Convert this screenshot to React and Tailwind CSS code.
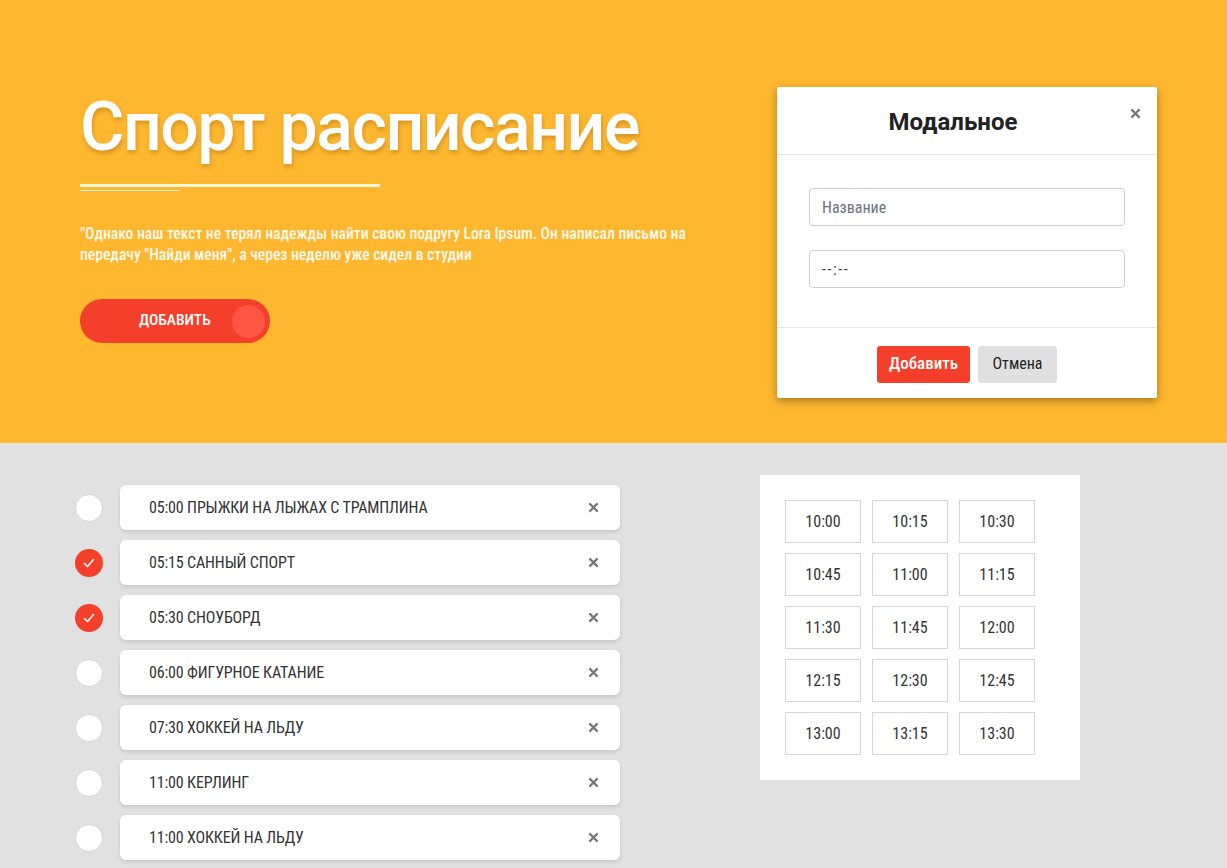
const items = [
  { t: "05:00 ПРЫЖКИ НА ЛЫЖАХ С ТРАМПЛИНА", c: false },
  { t: "05:15 САННЫЙ СПОРТ", c: true },
  { t: "05:30 СНОУБОРД", c: true },
  { t: "06:00 ФИГУРНОЕ КАТАНИЕ", c: false },
  { t: "07:30 ХОККЕЙ НА ЛЬДУ", c: false },
  { t: "11:00 КЕРЛИНГ", c: false },
  { t: "11:00 ХОККЕЙ НА ЛЬДУ", c: false },
];

const times = [
  "10:00", "10:15", "10:30",
  "10:45", "11:00", "11:15",
  "11:30", "11:45", "12:00",
  "12:15", "12:30", "12:45",
  "13:00", "13:15", "13:30",
];

function XIcon({ className }) {
  return (
    <svg viewBox="0 0 12 12" className={className} fill="none" stroke="currentColor" strokeWidth="2.4" strokeLinecap="butt">
      <path d="M1.5 1.5 L10.5 10.5 M10.5 1.5 L1.5 10.5" />
    </svg>
  );
}

export default function App() {
  return (
    <div className="min-h-[868px] bg-[#e1e1e1] font-['Roboto_Condensed',Roboto,sans-serif]">
      <header className="h-[443px] bg-[#feb72f] flex pl-[80px] pr-[70px] pt-[87px]">
        <div className="flex-1 flex flex-col">
          <h1 className="font-['Roboto',sans-serif] text-[68px] leading-[80px] font-medium tracking-[-1.5px] text-white [text-shadow:1px_3px_4px_rgba(120,70,0,0.3)]">
            Спорт расписание
          </h1>
          <div className="mt-[17px] w-[300px] h-[3px] bg-[#fff8d8]" />
          <div className="mt-[3px] w-[100px] h-[1px] bg-[#fff8d8]" />
          <p className="mt-[33px] w-[640px] text-[15.6px] leading-[21px] font-medium text-[#fffaf0]">
            "Однако наш текст не терял надежды найти свою подругу Lora Ipsum. Он написал письмо на передачу "Найди меня", а через неделю уже сидел в студии
          </p>
          <button className="mt-[33px] w-[190px] h-[44px] rounded-full bg-[#f4402a] flex items-center pl-[59px] pr-[5px] text-white text-[15.5px] font-medium">
            <span className="flex-1 text-left">ДОБАВИТЬ</span>
            <span className="w-[33px] h-[33px] rounded-full bg-[#ff5545]" />
          </button>
        </div>
        <div className="w-[380px] h-[311px] bg-white shadow-[0_3px_8px_rgba(0,0,0,0.35)] flex flex-col rounded-[2px]">
          <div className="h-[68px] border-b border-[#e6e6e6] flex items-center pl-[16px] pr-[16px]">
            <div className="flex-1 text-center font-['Roboto',sans-serif] font-bold text-[24px] text-[#222] pt-[2px]">
              Модальное
            </div>
            <div className="w-[28px] h-[28px] flex items-start justify-end -mt-[14px] text-[#777]">
              <XIcon className="w-[11px] h-[11px] mt-[8px]" />
            </div>
          </div>
          <div className="flex-1 flex flex-col gap-[24px] px-[32px] pt-[33px] border-b border-[#e6e6e6]">
            <input
              placeholder="Название"
              className="h-[38px] rounded-[4px] border border-[#cfcfcf] px-[12px] text-[16px] placeholder:text-[#6c757d] outline-none"
            />
            <input
              placeholder="--:--"
              className="h-[38px] rounded-[4px] border border-[#cfcfcf] px-[12px] text-[16px] tracking-[1.5px] placeholder:text-[#444] outline-none"
            />
          </div>
          <div className="h-[70px] flex items-center justify-center gap-[8px] pt-[2px]">
            <button className="h-[37px] w-[93px] rounded-[3px] bg-[#f4402a] text-white text-[17px] font-medium">
              Добавить
            </button>
            <button className="h-[37px] w-[79px] rounded-[3px] bg-[#e0e0e0] text-[#222] text-[16px]">
              Отмена
            </button>
          </div>
        </div>
      </header>
      <main className="flex pt-[32px] pl-[75px]">
        <ul className="flex flex-col gap-[10px] pt-[10px]">
          {items.map((it, i) => (
            <li key={i} className="flex items-center gap-[17px]">
              {it.c ? (
                <span className="w-[28px] h-[28px] rounded-full bg-[#f4402a] flex items-center justify-center">
                  <svg viewBox="0 0 16 16" className="w-[16px] h-[16px]" fill="none" stroke="white" strokeWidth="1.6" strokeLinecap="round" strokeLinejoin="round">
                    <path d="M3.5 8.5 L6.5 11.5 L12.5 4.5" />
                  </svg>
                </span>
              ) : (
                <span className="w-[28px] h-[28px] rounded-full bg-white border border-[#d6d6d6]" />
              )}
              <div className="w-[500px] h-[45px] bg-white rounded-[6px] shadow-[0_2px_4px_rgba(0,0,0,0.12)] flex items-center pl-[29px] pr-[21px]">
                <span className="flex-1 text-[16px] text-[#333] tracking-[-0.15px] pt-[1px]">{it.t}</span>
                <XIcon className="w-[11px] h-[11px] text-[#777]" />
              </div>
            </li>
          ))}
        </ul>
        <div className="ml-[140px] w-[320px] h-[305px] bg-white p-[25px]">
          <div className="grid grid-cols-[repeat(3,76px)] gap-x-[11px] gap-y-[10px]">
            {times.map((t) => (
              <div key={t} className="h-[43px] border border-[#d6d6d6] flex items-center justify-center text-[16px] text-[#333]">
                {t}
              </div>
            ))}
          </div>
        </div>
      </main>
    </div>
  );
}
